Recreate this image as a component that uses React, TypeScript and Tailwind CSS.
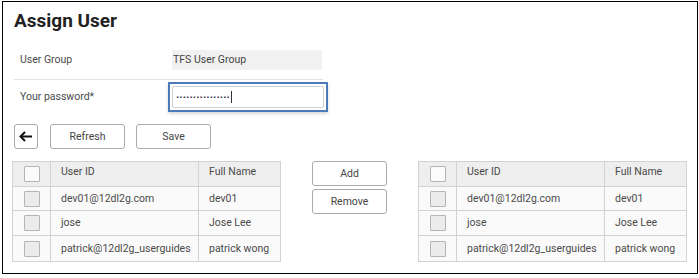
import React from "react";

const rows = [
  { id: "dev01@12dl2g.com", name: "dev01" },
  { id: "jose", name: "Jose Lee" },
  { id: "patrick@12dl2g_userguides", name: "patrick wong" },
];

function Box({ header }: { header?: boolean }) {
  return (
    <div
      className={
        "w-[16px] h-[16px] border border-[#b5b5b5] rounded-[1px] " +
        (header ? "bg-[#fbfbfb]" : "bg-[#ececec]")
      }
    />
  );
}

function UserTable() {
  return (
    <div className="w-[269px] border border-[#d2d2d2] flex flex-col text-[10.5px] text-[#4a4a4a]">
      <div className="flex h-[25px] bg-[#eeeeee] border-b border-[#d2d2d2]">
        <div className="w-[38px] flex items-center justify-center border-r border-[#d2d2d2]">
          <Box header />
        </div>
        <div className="w-[148px] pl-[10px] pt-[3px] leading-[14px] border-r border-[#d2d2d2]">User ID</div>
        <div className="w-[79px] pl-[10px] pt-[3px] leading-[14px]">Full Name</div>
      </div>
      {rows.map((r, i) => (
        <div
          key={r.id}
          className={
            "flex bg-[#fafafa] " +
            (i === 0 ? "h-[24px] " : "h-[25px] ") +
            (i < rows.length - 1 ? "border-b border-[#d2d2d2]" : "")
          }
        >
          <div className="w-[38px] flex items-center justify-center border-r border-[#d2d2d2]">
            <Box />
          </div>
          <div className="w-[148px] pl-[10px] flex items-center border-r border-[#d2d2d2] whitespace-nowrap">{r.id}</div>
          <div className="w-[79px] pl-[10px] flex items-center whitespace-nowrap">{r.name}</div>
        </div>
      ))}
    </div>
  );
}

function Btn({ children, className }: { children: React.ReactNode; className?: string }) {
  return (
    <div
      className={
        "w-[75px] h-[25px] border border-[#aaaaaa] rounded-[3px] bg-white flex items-center justify-center text-[10.5px] text-[#444] " +
        (className || "")
      }
    >
      {children}
    </div>
  );
}

export default function App() {
  return (
    <div className="w-[699px] h-[278px] bg-white font-['Roboto',_sans-serif] overflow-hidden">
      <div className="ml-[2px] mt-[1px] w-[696px] h-[273px] border border-black flex flex-col">
        <div className="ml-[11px] mt-[7px] text-[19px] leading-[24px] font-bold text-[#222]">Assign User</div>

        <div className="ml-[11px] mt-[17px] flex items-center h-[20px]">
          <div className="w-[154px] pl-[6px] text-[10.5px] text-[#4a4a4a]">User Group</div>
          <div className="ml-[4px] w-[150px] h-[20px] bg-[#f1f1f1] flex items-center pl-[1px] text-[10.5px] text-[#444]">
            TFS User Group
          </div>
        </div>

        <div className="ml-[11px] mt-[9px] w-[309px] h-px bg-[#e2e2e2]" />

        <div className="ml-[11px] mt-[2px] flex items-center h-[30px]">
          <div className="w-[154px] pl-[6px] text-[10.5px] text-[#4a4a4a]">Your password*</div>
          <div className="w-[160px] h-[30px] border-2 border-[#4a7ab8] p-[2px] shadow-[0_2px_3px_rgba(0,0,0,0.15)]">
            <div className="w-full h-full border border-[#cfcfcf] rounded-[2px] bg-white flex items-center pl-[3px]">
              <span className="text-[11px] font-bold tracking-[0.05px] text-[#334] leading-none">················</span>
              <span className="ml-[1px] w-px h-[12px] bg-[#333]" />
            </div>
          </div>
        </div>

        <div className="ml-[11px] mt-[12px] flex items-center">
          <div className="w-[24px] h-[25px] border border-[#aaaaaa] rounded-[3px] bg-white flex items-center justify-center">
            <svg width="14" height="11" viewBox="0 0 14 11" fill="none">
              <path d="M13 5.5H2" stroke="#111" strokeWidth="2" />
              <path d="M6 1L1.5 5.5L6 10" stroke="#111" strokeWidth="2" />
            </svg>
          </div>
          <Btn className="ml-[12px]">Refresh</Btn>
          <Btn className="ml-[11px]">Save</Btn>
        </div>

        <div className="ml-[9px] mt-[12px] flex items-start">
          <UserTable />
          <div className="ml-[31px] flex flex-col gap-[3px]">
            <Btn>Add</Btn>
            <Btn>Remove</Btn>
          </div>
          <div className="ml-[31px]">
            <UserTable />
          </div>
        </div>
      </div>
    </div>
  );
}
